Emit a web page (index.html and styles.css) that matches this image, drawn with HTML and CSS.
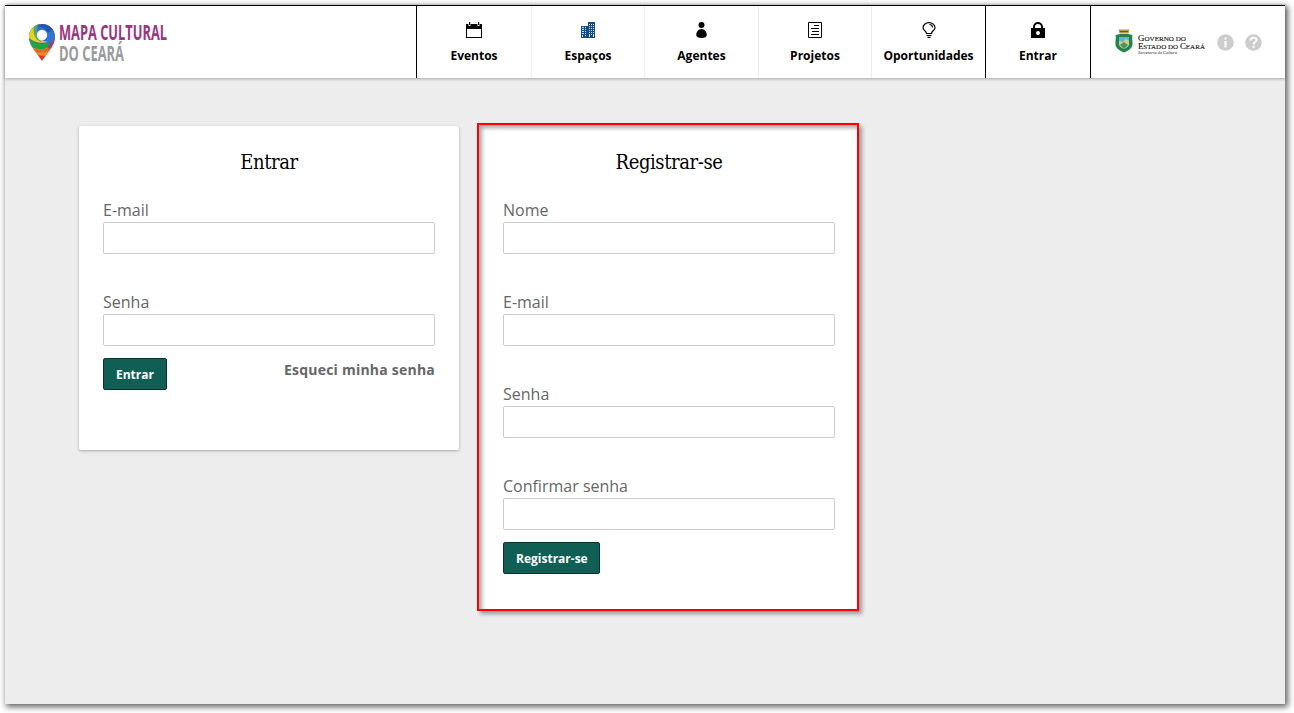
FILE: index.html
```html
<!DOCTYPE html>
<html lang="pt-BR">
<head>
<meta charset="utf-8">
<title>Mapa Cultural do Ceará</title>
<link rel="stylesheet" href="styles.css">
</head>
<body>
<div class="page">
  <header class="header">
    <a class="brand">
      <svg width="144" height="42" viewBox="0 0 144 42">
        <defs><clipPath id="pin"><path d="M14 2C6.500 2 1 7.500 1 15c0 5 3 10 6 14l7 10 7-10c3-4 6-9 6-14C27 7.500 21.500 2 14 2z"/></clipPath></defs>
        <g clip-path="url(#pin)">
          <rect width="28" height="40" fill="#e8312a"/>
          <path d="M0 22h28v11c-8 2-14 1-22-1l-6-4z" fill="#f0882a"/>
          <path d="M3 26c6 2 14 2 21-2v4c-6 3-12 3-18 2z" fill="#e5672a"/>
          <path d="M0 0h28v16c-2 4-7 6-12 6L0 18z" fill="#2f74cf"/>
          <path d="M28 15c-1 4-4 6-8 7l-3 2 5 3 6-5z" fill="#9b3b8e"/>
          <path d="M0 16c7 5 14 7 22 5-1 4-4 6-9 6C6 27 1 24 0 20z" fill="#1fa34c"/>
          <path d="M0 6l7-3c-1 9 3 16 13 17-8 2-15 0-20-5z" fill="#e3d51d"/>
          <path d="M6 3l5-2c-3 6-3 14 3 19C8 19 4 12 6 3z" fill="#5aa469"/>
          <path d="M9 4c5-3 12-2 16 3l-5 4C18 7 14 5 9 4z" fill="#2358b0"/>
        </g>
        <circle cx="14" cy="13" r="5.200" fill="#fff"/>
        <text class="brand-top" x="31" y="18" textLength="108" lengthAdjust="spacingAndGlyphs">MAPA CULTURAL</text>
        <text class="brand-sub" x="31" y="39" textLength="65" lengthAdjust="spacingAndGlyphs">DO CEARÁ</text>
      </svg>
    </a>
    <nav class="nav">
      <a class="nav-item">
        <svg width="16" height="16"><path d="M0 2h2.500v2h2V2h7v2h2V2H16v14H0zM1 7v8h14V7z" fill-rule="evenodd"/><path d="M3 0h1.200v3H3zM12 0h1.200v3H12z"/></svg>
        <span>Eventos</span></a>
      <a class="nav-item narrow">
        <svg width="16" height="16"><path d="M1 4h6v12H1zM8 0h7v16H7V4h1z" fill="#174b85"/><path d="M2 5h2v1H2zM5 5h1v1H5zM2 7h2v1H2zM5 7h1v1H5zM2 9h2v1H2zM5 9h1v1H5zM2 11h2v1H2zM5 11h1v1H5zM2 13h1v2H2zM5 13h1v1H5zM9 2h1v1H9zM11 2h1v1h-1zM9 4h1v1H9zM11 4h1v1h-1zM9 6h1v1H9zM11 6h1v1h-1zM9 8h1v1H9zM11 8h1v1h-1zM9 10h1v1H9zM11 10h1v1h-1zM9 12h1v3H9zM11 12h1v1h-1zM13 2h1v1h-1zM13 4h1v1h-1zM13 6h1v1h-1zM13 8h1v1h-1zM13 10h1v1h-1zM13 12h1v3h-1z" fill="#c4e4fa"/></svg>
        <span>Espaços</span></a>
      <a class="nav-item">
        <svg width="16" height="16"><circle cx="7.500" cy="3" r="3"/><path d="M7.500 7c3 0 5.300 3 5.300 6 0 2-2.300 3-5.300 3s-5.300-1-5.300-3c0-3 2.300-6 5.300-6z"/></svg>
        <span>Agentes</span></a>
      <a class="nav-item narrow">
        <svg width="16" height="16"><path d="M1.500.5h13v15h-13z" fill="none" stroke="#000"/><path d="M7 3h5v1H7zM4 6h8v1H4zM5 9h7v1H5zM4 12h8v1H4z"/></svg>
        <span>Projetos</span></a>
      <a class="nav-item last">
        <svg width="16" height="16" fill="none" stroke="#000" stroke-width="1.200"><path d="M5.500 11.500C5.500 9 2 8.500 2 5.800S4.500.6 8 .6s6 2.400 6 5.200-3.500 3.200-3.500 5.700zM5.500 13.500h5M6.500 15.300h3M8.500 2.500c2 0 3 1 3 3"/></svg>
        <span>Oportunidades</span></a>
      <a class="nav-item login">
        <svg width="16" height="16"><path d="M1 6h2V5a5 5 0 0 1 10 0v1h2v10H1zM5 6h6V5a3 3 0 0 0-6 0zm3 3a2 2 0 1 0 0 4 2 2 0 0 0 0-4z" fill-rule="evenodd"/></svg>
        <span>Entrar</span></a>
    </nav>
    <div class="gov">
      <svg width="91" height="26" viewBox="0 0 91 26">
        <path d="M3.500.5h11l-1 4h-9z" fill="#b89a4d"/><path d="M5 2h8v1H5z" fill="#6d592c"/>
        <path d="M.5 6L5 5h8l4.500 1c-1 3 .5 6 0 10-1 4-5 6-8.500 7.500C5.500 22 1.500 20 .5 16c-.5-4 1-7 0-10z" fill="#218449"/>
        <path d="M4 8h10v8c-1 2-3 3-5 4-2-1-4-2-5-4z" fill="#d9c98c"/>
        <path d="M4 8h10v4l-3-2-3 3-4-1z" fill="#65b5ce"/><path d="M5 16l4-3 4 3-4 4z" fill="#489863"/>
        <text class="gov-name" x="23" y="12" textLength="48" lengthAdjust="spacingAndGlyphs">G<tspan class="sc">OVERNO DO</tspan></text>
        <text class="gov-name" x="23" y="20" textLength="67" lengthAdjust="spacingAndGlyphs">E<tspan class="sc">STADO DO </tspan>C<tspan class="sc">EARÁ</tspan></text>
        <text class="gov-sub" x="23" y="25" textLength="39" lengthAdjust="spacingAndGlyphs">Secretaria da Cultura</text>
      </svg>
      <svg width="17" height="17"><circle cx="8.500" cy="8.500" r="8.300" fill="#ccc"/><path d="M7.500 3.500h2v2h-2zM7.500 7h2v6.500h-2z" fill="#fff"/></svg>
      <svg width="17" height="17"><circle cx="8.500" cy="8.500" r="8.300" fill="#ccc"/><path d="M5.500 6.500c0-4 6-3.500 6-.5 0 2-3 2-3 4.500" fill="none" stroke="#fff" stroke-width="1.900"/><path d="M7.500 11.800h2v2h-2z" fill="#fff"/></svg>
    </div>
  </header>
  <main class="main">
    <form class="card">
      <h1>Entrar</h1>
      <label class="field">E-mail<input type="text"></label>
      <label class="field">Senha<input type="password"></label>
      <div class="actions"><button type="button">Entrar</button><a class="forgot">Esqueci minha senha</a></div>
    </form>
    <form class="card register">
      <h1>Registrar-se</h1>
      <label class="field">Nome<input type="text"></label>
      <label class="field">E-mail<input type="text"></label>
      <label class="field">Senha<input type="password"></label>
      <label class="field">Confirmar senha<input type="password"></label>
      <div class="actions"><button class="wide" type="button">Registrar-se</button></div>
    </form>
  </main>
</div>
</body>
</html>
```
FILE: styles.css
```css
* { box-sizing: border-box; }
body {
  margin: 0;
  padding: 5px 9px 9px 5px;
  height: 713px;
  overflow: hidden;
  background: #fff;
  font-family: "Open Sans", sans-serif;
}
.page {
  height: 699px;
  background: #ededed;
  box-shadow: 2px 2px 6px 1px rgba(0, 0, 0, .6);
}
.header {
  display: flex;
  height: 73px;
  background: #fff;
  border-top: 1px solid #000;
  box-shadow: 0 1px 3px rgba(0, 0, 0, .3);
}
.brand { width: 411px; padding: 16px 0 0 23px; }
.brand svg, .nav svg, .gov svg { display: block; overflow: visible; }
.brand-top { font: 700 22px "Open Sans", sans-serif; fill: #9c3480; }
.brand-sub { font: 700 21px "Open Sans", sans-serif; fill: #999b9e; }
.nav { display: flex; border-left: 1px solid #000; }
.nav-item {
  display: flex;
  flex-direction: column;
  align-items: center;
  width: 115px;
  padding-top: 16px;
  border-right: 1px solid #ededed;
  font-size: 12px;
  font-weight: 700;
  line-height: 18px;
}
.nav-item + .nav-item { width: 114px; }
.nav .nav-item.narrow { width: 113px; }
.nav .nav-item.last { border-right-color: #000; }
.nav .nav-item.login { width: 105px; border-right-color: #000; }
.nav-item span { margin-top: 9px; }
.gov { display: flex; align-items: flex-start; padding: 23px 0 0 24px; }
.gov svg + svg { margin: 5px 0 0 11px; }
.gov-name { font: 8.500px "Liberation Serif", serif; fill: #222; stroke: #222; stroke-width: .15px; }
.sc { font-size: 6.800px; }
.gov-sub { font: italic 4px "Liberation Serif", serif; fill: #222; }
.main { display: flex; align-items: flex-start; gap: 20px; padding: 48px 74px; }
.card {
  width: 380px;
  height: 324px;
  padding: 24px;
  background: #fff;
  border-radius: 2px;
  box-shadow: 0 1px 3px rgba(0, 0, 0, .3);
}
.card h1 {
  margin: 0 0 36px;
  font: 400 20px/24px "DejaVu Serif Condensed", "DejaVu Serif", serif;
  letter-spacing: -.4px;
  text-align: center;
  color: #000;
}
.field {
  display: block;
  height: 92px;
  font-size: 16px;
  line-height: 24px;
  color: #666;
}
.field:nth-of-type(1) { margin-top: -12px; }
.field input {
  display: block;
  width: 332px;
  height: 32px;
  border: 1px solid #ccc;
  border-radius: 2px;
  background: #fff;
}
.actions { display: flex; justify-content: space-between; margin-top: -24px; }
.actions button {
  height: 32px;
  padding: 0 12px;
  border: 1px solid #0a332f;
  border-radius: 2px;
  background: #105e54;
  color: #fff;
  font: 700 12px "Open Sans", sans-serif;
}
.actions .wide { width: 97px; white-space: nowrap; }
.forgot { font-size: 14px; font-weight: 700; line-height: 24px; letter-spacing: .22px; color: #666; }
.register {
  width: 382px;
  height: 488px;
  margin: -3px 0 0 -2px;
  padding: 25px 22px 0 24px;
  border: 2px solid #f00;
  border-radius: 0;
  box-shadow: 3px 3px 4px rgba(0, 0, 0, .35), inset 3px 3px 4px rgba(0, 0, 0, .35);
}
```
